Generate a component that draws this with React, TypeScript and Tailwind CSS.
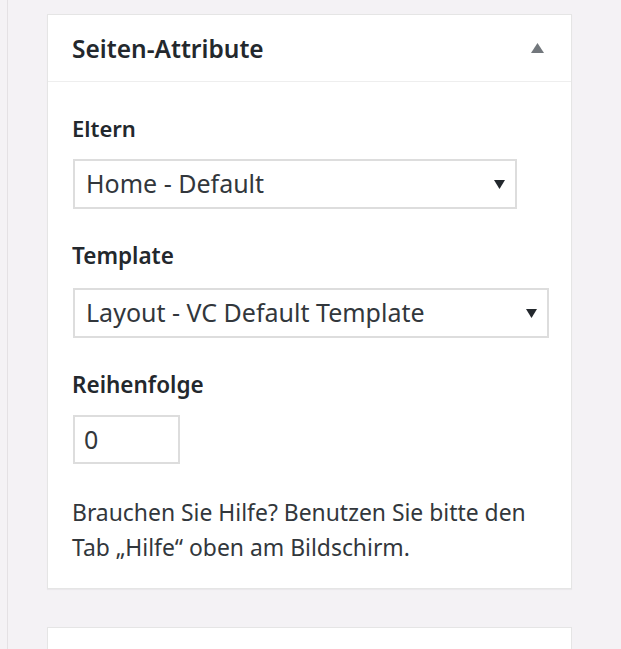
import React from "react";

const font = { fontFamily: '"Noto Sans", "Open Sans", sans-serif' };

function DownArrow() {
  return (
    <svg width="11" height="9" viewBox="0 0 11 9" className="shrink-0">
      <polygon points="0,0 11,0 5.5,9" fill="#23282d" />
    </svg>
  );
}

export default function App() {
  return (
    <div className="min-h-[649px] w-full bg-[#f4f2f5] text-[#23282d] overflow-hidden" style={font}>
      <div className="ml-[7px] border-l border-[#e4e1e4] min-h-[649px] pl-[39px] pt-[14px]">
        <div className="w-[525px] border border-[#e5e5e5] bg-white shadow-[0_1px_1px_rgba(0,0,0,0.04)]">
          <div className="h-[67px] border-b border-[#eeeeee] flex items-center justify-between pl-[24px] pr-[27px]">
            <h2 className="text-[24.5px] font-semibold leading-none pt-[3px]">Seiten-Attribute</h2>
            <svg width="13" height="10" viewBox="0 0 13 10">
              <polygon points="6.5,0 13,10 0,10" fill="#72777c" />
            </svg>
          </div>
          <div className="pl-[24px] pt-[31px] pb-[23px]">
            <div className="text-[22px] font-semibold leading-[30px]">Eltern</div>
            <div className="ml-px mt-[16px] w-[444px] h-[50px] border-2 border-[#dddddd] flex items-center justify-between pl-[11px] pr-[10px] text-[25px] text-[#32373c]">
              <span>Home - Default</span>
              <DownArrow />
            </div>
            <div className="mt-[32px] text-[22.5px] font-semibold leading-[30px]">Template</div>
            <div className="ml-px mt-[17px] w-[476px] h-[50px] border-2 border-[#dddddd] flex items-center justify-between pl-[11px] pr-[10px] text-[25px] text-[#32373c]">
              <span>Layout - VC Default Template</span>
              <DownArrow />
            </div>
            <div className="mt-[32px] text-[22.5px] font-semibold leading-[30px]">Reihenfolge</div>
            <div className="ml-px mt-[15px] w-[107px] h-[49px] border-2 border-[#dddddd] flex items-center pl-[9px] text-[25px] text-[#32373c]">
              0
            </div>
            <p className="mt-[31px] text-[22.9px] leading-[35px] text-[#32373c] w-[476px]">
              Brauchen Sie Hilfe? Benutzen Sie bitte den Tab „Hilfe“ oben am Bildschirm.
            </p>
          </div>
        </div>
        <div className="mt-[38px] w-[525px] h-[40px] border border-[#e5e5e5] bg-white"></div>
      </div>
    </div>
  );
}
